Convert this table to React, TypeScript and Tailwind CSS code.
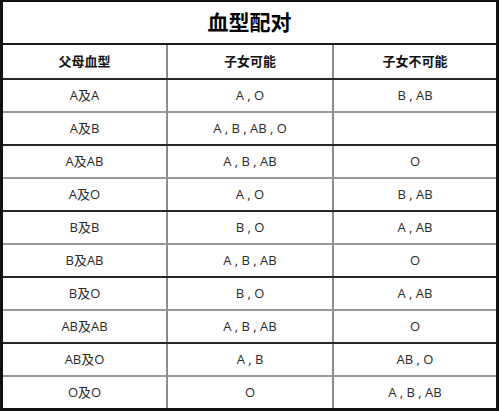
import clsx from 'clsx';

const rows: [string, string, string][] = [
  ['A及A', 'A , O', 'B , AB'],
  ['A及B', 'A , B , AB , O', ''],
  ['A及AB', 'A , B , AB', 'O'],
  ['A及O', 'A , O', 'B , AB'],
  ['B及B', 'B , O', 'A , AB'],
  ['B及AB', 'A , B , AB', 'O'],
  ['B及O', 'B , O', 'A , AB'],
  ['AB及AB', 'A , B , AB', 'O'],
  ['AB及O', 'A , B', 'AB , O'],
  ['O及O', 'O', 'A , B , AB'],
];

const font = { fontFamily: '"Open Sans", "Noto Sans CJK SC", sans-serif' };

function Row({ cells, head, line, last }: { cells: string[]; head?: boolean; line?: 'dark' | 'grey'; last?: boolean }) {
  return (
    <div
      className={clsx(
        'grid grid-cols-[163px_164px_162px] gap-x-[2px] bg-[#8c8c8c]',
        head ? 'h-[35px]' : last ? 'h-[31px]' : 'h-[33px]',
        !last && 'border-b-2',
        line === 'dark' ? 'border-[#262626]' : 'border-[#9a9a9a]'
      )}
    >
      {cells.map((c, i) => (
        <div
          key={i}
          className={clsx(
            'flex items-center justify-center bg-white text-[13px]',
            head ? 'font-bold text-[#111]' : 'text-[#2a2a2a]'
          )}
        >
          {c}
        </div>
      ))}
    </div>
  );
}

export default function App() {
  return (
    <div className="w-[500px] h-[411px] bg-white" style={font}>
      <div className="w-[499px] h-[411px] flex flex-col border-l-[3px] border-r-[3px] border-t-2 border-b-[3px] border-[#111]">
        <div className="h-[43px] shrink-0 flex items-center justify-center border-b-2 border-[#1a1a1a] text-[21px] font-bold text-black">
          血型配对
        </div>
        <Row cells={['父母血型', '子女可能', '子女不可能']} head line="dark" />
        {rows.map((r, i) => (
          <Row key={i} cells={r} line={i % 2 === 0 ? 'grey' : 'dark'} last={i === rows.length - 1} />
        ))}
      </div>
    </div>
  );
}
